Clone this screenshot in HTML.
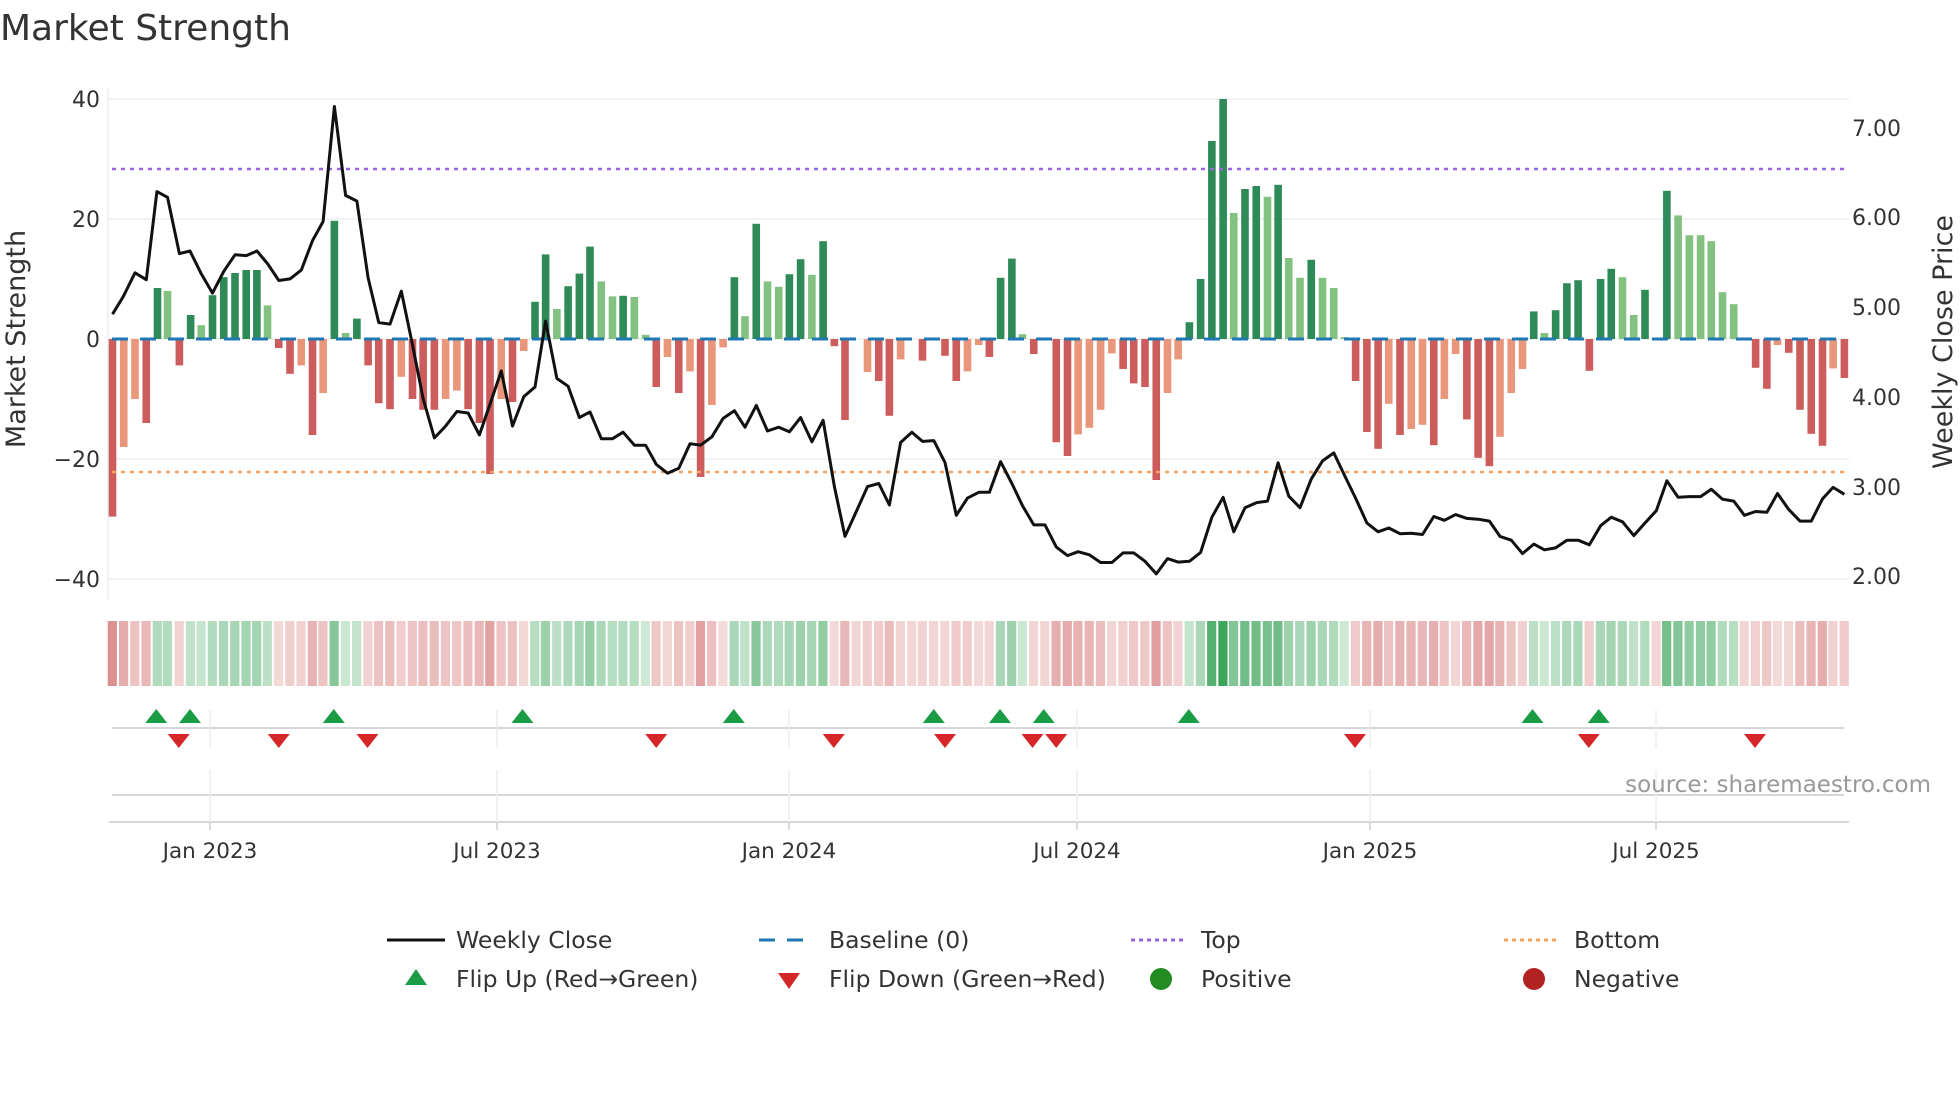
<!DOCTYPE html>
<html><head><meta charset="utf-8">
<style>
html,body{margin:0;padding:0;background:#fff;}
svg{display:block;font-family:"DejaVu Sans","Liberation Sans",sans-serif;}
</style></head>
<body>
<svg id="c" width="1960" height="1102" viewBox="0 0 1960 1102" xmlns="http://www.w3.org/2000/svg">
<text x="0" y="40" font-size="36" fill="#333">Market Strength</text>
<g id="grid"></g>
<g id="bars"></g>
<g id="lines"></g>
<g id="heat"></g>
<g id="marks"></g>
<g id="axes"></g>
<text x="1931" y="792" font-size="23" fill="#999" text-anchor="end">source: sharemaestro.com</text>
<text transform="translate(25,339) rotate(-90)" font-size="27" fill="#333" text-anchor="middle">Market Strength</text>
<text transform="translate(1952,342) rotate(-90)" font-size="27" fill="#333" text-anchor="middle">Weekly Close Price</text>
<g font-size="23.5" fill="#333">
<line x1="387" y1="940" x2="445" y2="940" stroke="#111" stroke-width="3"/>
<text x="456" y="948">Weekly Close</text>
<line x1="759" y1="940" x2="814" y2="940" stroke="#1f77b4" stroke-width="3" stroke-dasharray="16,12"/>
<text x="829" y="948">Baseline (0)</text>
<line x1="1131" y1="940" x2="1186" y2="940" stroke="#9966dd" stroke-width="3" stroke-dasharray="4,4"/>
<text x="1201" y="948">Top</text>
<line x1="1504" y1="940" x2="1559" y2="940" stroke="#f4a460" stroke-width="3" stroke-dasharray="4,4"/>
<text x="1574" y="948">Bottom</text>
<polygon points="405,985 427,985 416,969" fill="#1a9c45"/>
<text x="456" y="987">Flip Up (Red→Green)</text>
<polygon points="778,973 800,973 789,989" fill="#d62728"/>
<text x="829" y="987">Flip Down (Green→Red)</text>
<circle cx="1161" cy="979" r="11" fill="#228b22"/>
<text x="1201" y="987">Positive</text>
<circle cx="1534" cy="979" r="11" fill="#b22222"/>
<text x="1574" y="987">Negative</text>
</g>
</svg>
<script>
var NS="http://www.w3.org/2000/svg";
function el(p,t,a){var e=document.createElementNS(NS,t);for(var k in a)e.setAttribute(k,a[k]);document.getElementById(p).appendChild(e);return e;}
var b1=[[180,-29.6,1],[198,-18,0],[216,-10,0],[234,-14,1],[252,8.5,1],[268,8,0],[287,-4.4,1],[305,4,1],[322,2.3,0],[340,7.3,1],[358,10.3,1],[376,11,1],[394,11.5,1],[411,11.5,1],[428,5.6,0],[446,-1.5,1],[464,-5.8,1],[482,-4.4,0],[500,-16,1],[517,-9,0],[535,19.7,1],[553,1,0],[571,3.4,1],[589,-4.4,1],[606,-10.7,1],[624,-11.7,1],[642,-6.3,0],[660,-10,1],[677,-11.8,1],[695,-11.8,1],[713,-10,0],[731,-8.6,0],[749,-11.7,1],[767,-14,1],[784,-22.5,1],[802,-10,0],[820,-10.5,1],[838,-2,0],[856,6.2,1],[873,14.1,1],[891,5,0],[909,8.8,1],[927,10.9,1],[944,15.4,1],[962,9.6,0],[980,7.1,0],[997,7.2,1],[1015,7,0],[1033,0.7,0],[1050,-8,1],[1068,-3,0],[1086,-9,1],[1104,-5.4,0],[1121,-23,1],[1139,-11,0],[1157,-1.4,0],[1175,10.3,1],[1192,3.8,0],[1210,19.2,1],[1228,9.6,0],[1246,8.7,0],[1263,10.8,1],[1281,13.3,1],[1299,10.7,0],[1317,16.3,1],[1335,-1.2,1],[1352,-13.5,1],[1370,0,0],[1388,-5.5,0],[1406,-7,1],[1423,-12.8,1],[1441,-3.4,0],[1459,0,0],[1476,-3.6,1],[1494,0,0],[1512,-2.8,1],[1530,-7,1],[1548,-5.4,0],[1566,-1,0]];
var b2=[[15,-3,1],[33,10.2,1],[51,13.4,1],[68,0.8,0],[86,-2.5,1],[104,0,0],[122,-17.2,1],[140,-19.5,1],[157,-15.9,0],[175,-14.8,0],[193,-11.8,0],[211,-2.4,0],[229,-5,1],[246,-7.4,1],[264,-8,1],[282,-23.5,1],[300,-9,0],[317,-3.4,0],[335,2.8,1],[353,10,1],[371,33,1],[389,40,1],[406,21,0],[424,25,1],[442,25.5,1],[460,23.7,0],[477,25.7,1],[494,13.5,0],[512,10.2,0],[530,13.2,1],[548,10.2,0],[566,8.5,0],[583,0.3,0],[601,-7,1],[619,-15.5,1],[637,-18.3,1],[654,-10.8,0],[672,-16,1],[690,-15,0],[708,-14.3,0],[726,-17.7,1],[743,-10,0],[761,-2.5,0],[779,-13.4,1],[797,-19.8,1],[815,-21.2,1],[832,-16.3,0],[850,-9,0],[868,-5,0],[886,4.6,1],[903,1,0],[921,4.8,1],[939,9.3,1],[957,9.8,1],[975,-5.3,1],[993,10,1],[1010,11.7,1],[1028,10.3,0],[1046,4,0],[1064,8.2,1],[1082,0,0],[1099,24.7,1],[1117,20.6,0],[1135,17.3,0],[1153,17.3,0],[1170,16.3,0],[1188,7.8,0],[1206,5.8,0],[1223,0,0],[1241,-4.8,1],[1259,-8.3,1],[1276,-1,0],[1294,-2.3,1],[1312,-11.8,1],[1330,-15.8,1],[1348,-17.8,1],[1365,-4.9,0],[1383,-6.5,1]];
var bars=b1.map(function(a){return [a[0]/1.6,a[1],a[2]];}).concat(b2.map(function(a){return [980+a[0]/1.6,a[1],a[2]];}));
var Y0=339,S=6;
[40,20,0,-20,-40].forEach(function(v){var y=Y0-v*S;el("grid","line",{x1:109,x2:1849,y1:y,y2:y,stroke:"#ebedf0","stroke-width":1.5});
 el("axes","text",{x:100,y:y+8,"font-size":22,fill:"#333","text-anchor":"end"}).textContent=(v<0?"\u2212"+(-v):v);});
el("grid","line",{x1:108,x2:108,y1:88,y2:600,stroke:"#ebedf0","stroke-width":1.5});
[["7.00",128],["6.00",217],["5.00",307],["4.00",397],["3.00",487],["2.00",576]].forEach(function(t){
 el("axes","text",{x:1852,y:t[1]+8,"font-size":22,fill:"#333"}).textContent=t[0];});
bars.forEach(function(b){var v=b[1];if(v==0)return;var col=v>0?(b[2]?"#2e8b57":"#82c17f"):(b[2]?"#cd5c5c":"#e9967a");
 var h=Math.abs(v)*S;el("bars","rect",{x:b[0]-3.8,y:v>0?Y0-h:Y0,width:7.6,height:h,fill:col});});
el("lines","line",{x1:112,x2:1845,y1:Y0,y2:Y0,stroke:"#1f77b4","stroke-width":3,"stroke-dasharray":"16,12"});
el("lines","line",{x1:112,x2:1845,y1:169,y2:169,stroke:"#9966dd","stroke-width":2.5,"stroke-dasharray":"4,5"});
el("lines","line",{x1:112,x2:1845,y1:472,y2:472,stroke:"#f4a460","stroke-width":2.5,"stroke-dasharray":"4,5"});
var p1=[[180,820],[197,775],[216,712],[234,730],[251,500],[268,515],[287,662],[304,655],[322,715],[340,765],[358,708],[376,665],[394,667],[411,655],[428,688],[446,732],[464,728],[482,705],[500,628],[517,578],[535,278],[553,510],[571,525],[589,725],[606,842],[624,846],[642,760],[660,900],[677,1040],[695,1143],[713,1112],[731,1074],[749,1078],[767,1135],[784,1055],[802,968],[820,1112],[838,1035],[856,1010],[873,838],[891,988],[909,1008],[927,1090],[944,1075],[962,1145],[980,1145],[997,1128],[1015,1162],[1033,1162],[1050,1212],[1068,1235],[1086,1222],[1104,1158],[1121,1162],[1139,1140],[1157,1092],[1175,1072],[1192,1115],[1210,1058],[1228,1125],[1246,1115],[1263,1127],[1281,1090],[1299,1153],[1317,1097],[1335,1270],[1352,1400],[1370,1335],[1388,1270],[1406,1262],[1423,1318],[1441,1155],[1459,1128],[1476,1152],[1494,1150],[1512,1207],[1530,1345],[1548,1300],[1566,1285]];
var p2=[[15,1285],[33,1205],[51,1262],[68,1320],[86,1370],[104,1370],[122,1428],[140,1450],[157,1440],[175,1448],[193,1468],[211,1468],[229,1443],[246,1443],[264,1465],[282,1498],[300,1458],[317,1467],[335,1465],[353,1442],[371,1350],[389,1298],[406,1388],[424,1325],[442,1312],[460,1308],[477,1208],[494,1295],[512,1325],[530,1250],[548,1203],[566,1182],[583,1240],[601,1300],[619,1365],[637,1388],[654,1378],[672,1393],[690,1392],[708,1395],[726,1348],[743,1358],[761,1343],[779,1353],[797,1355],[815,1360],[832,1400],[850,1410],[868,1445],[886,1420],[903,1435],[921,1430],[939,1410],[957,1410],[975,1422],[993,1372],[1010,1350],[1028,1362],[1046,1398],[1064,1365],[1082,1333],[1099,1255],[1117,1298],[1135,1296],[1153,1296],[1170,1277],[1188,1303],[1206,1308],[1223,1345],[1241,1335],[1259,1337],[1276,1288],[1294,1330],[1312,1360],[1330,1360],[1348,1302],[1365,1272],[1383,1290]];
var pts=p1.map(function(a){return (a[0]/1.6).toFixed(1)+","+(a[1]/2.61).toFixed(1);}).concat(p2.map(function(a){return (980+a[0]/1.6).toFixed(1)+","+(a[1]/2.61).toFixed(1);}));
el("lines","polyline",{points:pts.join(" "),fill:"none",stroke:"#111","stroke-width":3,"stroke-linejoin":"round"});
bars.forEach(function(b){var v=b[1];var a=Math.min(1,0.25+Math.abs(v)/40*0.75);var col;
 if(v>0){col="rgba(60,165,90,"+a.toFixed(2)+")";}else{col="rgba(205,92,92,"+(v==0?0.25:a*0.85).toFixed(2)+")";}
 el("heat","rect",{x:b[0]-4.8,y:621,width:9.2,height:65,fill:col});});
el("marks","line",{x1:112,x2:1844,y1:728,y2:728,stroke:"#d5d7da","stroke-width":2});
el("marks","line",{x1:112,x2:1844,y1:795,y2:795,stroke:"#d5d7da","stroke-width":2});
el("marks","line",{x1:109,x2:1849,y1:822,y2:822,stroke:"#d5d7da","stroke-width":2});
[["Jan 2023",210],["Jul 2023",497],["Jan 2024",789],["Jul 2024",1077],["Jan 2025",1370],["Jul 2025",1656]].forEach(function(t){
 el("marks","line",{x1:t[1],x2:t[1],y1:710,y2:748,stroke:"#eceef1","stroke-width":1.5});
 el("marks","line",{x1:t[1],x2:t[1],y1:770,y2:822,stroke:"#eceef1","stroke-width":1.5});
 el("marks","line",{x1:t[1],x2:t[1],y1:822,y2:830,stroke:"#ccc","stroke-width":1.5});
 el("axes","text",{x:t[1],y:858,"font-size":21.5,fill:"#333","text-anchor":"middle"}).textContent=t[0];});
[125,152,267,418,587,747,800,835,951,1226,1279].forEach(function(x){x*=1.25;
 el("marks","polygon",{points:(x-11)+",723 "+(x+11)+",723 "+x+",709",fill:"#1a9c45"});});
[143,223,294,525,667,756,826,845,1084,1271,1404].forEach(function(x){x*=1.25;
 el("marks","polygon",{points:(x-11)+",734 "+(x+11)+",734 "+x+",748",fill:"#d62728"});});
</script>
</body></html>
